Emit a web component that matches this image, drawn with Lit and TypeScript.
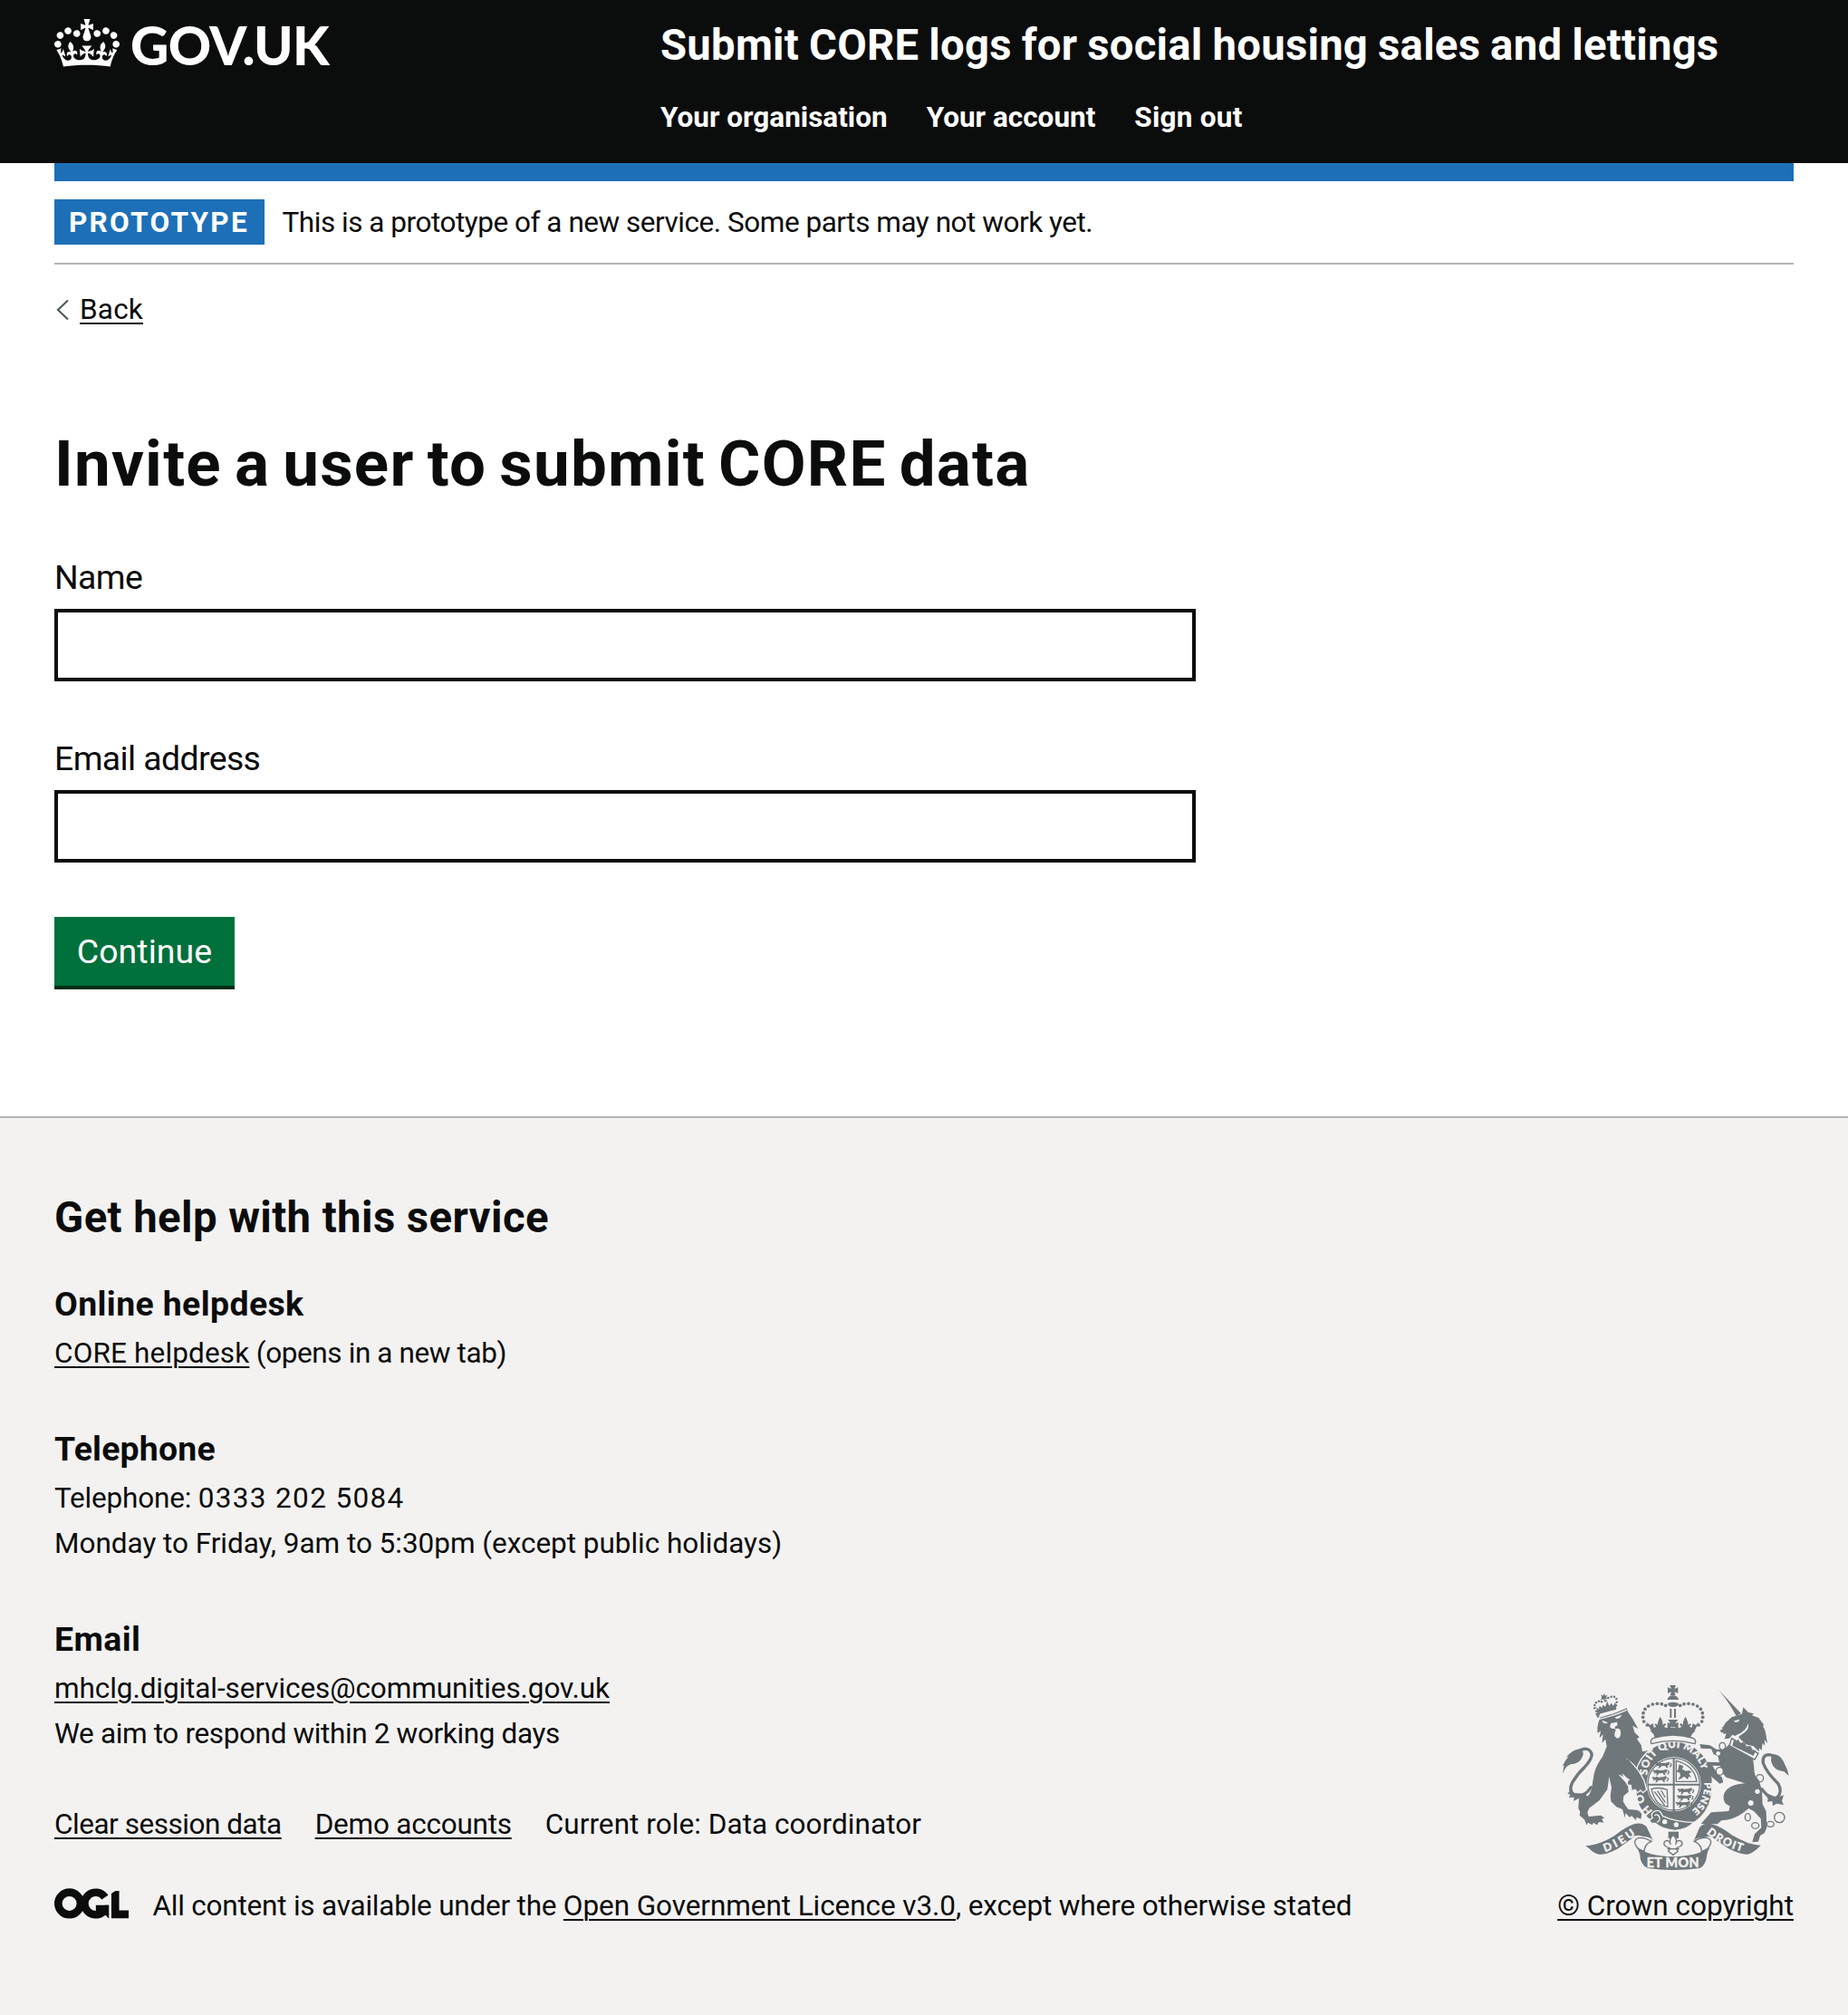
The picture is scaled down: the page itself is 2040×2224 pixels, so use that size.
import { LitElement, html, svg, css } from "lit";
import { customElement } from "lit/decorators.js";

type Dot = [number, number];

const ARCH_DOTS: Dot[] = [
  [352, 192], [341, 180], [338, 166], [339, 152], [345, 139], [356, 129],
  [370, 123], [385, 121], [400, 122], [413, 127],
];

const LION_CROWN_DOTS: Dot[] = [
  [184, 146], [178, 136], [178, 126], [183, 118], [192, 113], [201, 115],
  [214, 112], [223, 102], [233, 98], [243, 98], [250, 105], [251, 116], [249, 127],
];

@customElement("govuk-crown")
class GovukCrown extends LitElement {
  static styles = css`
    :host { display: block; width: 72px; height: 53px; }
    .mark { display: block; width: 100%; height: 100%; fill: currentColor; }
  `;
  render() {
    return html`<svg class="mark" viewBox="0 0 132 97" aria-hidden="true">
      <path fill-rule="evenodd" d="M25 30.2c3.5 1.5 7.7-.2 9.1-3.7 1.5-3.6-.2-7.8-3.9-9.2-3.6-1.4-7.6.3-9.1 3.9-1.4 3.5.3 7.5 3.9 9zM9 39.5c3.6 1.5 7.8-.2 9.2-3.7 1.5-3.6-.2-7.8-3.9-9.1-3.6-1.5-7.6.2-9.1 3.8-1.4 3.5.3 7.5 3.8 9zM4.4 57.2c3.5 1.5 7.7-.2 9.1-3.8 1.5-3.6-.2-7.7-3.9-9.1-3.5-1.5-7.6.3-9.1 3.8-1.4 3.5.3 7.6 3.9 9.1zm38.3-21.4c3.5 1.5 7.7-.2 9.1-3.8 1.5-3.6-.2-7.7-3.9-9.1-3.6-1.5-7.6.3-9.1 3.8-1.3 3.6.4 7.7 3.9 9.1zm64.4-5.6c-3.6 1.5-7.8-.2-9.1-3.7-1.5-3.6.2-7.8 3.8-9.2 3.6-1.4 7.7.3 9.2 3.9 1.3 3.5-.4 7.5-3.9 9zm15.9 9.3c-3.6 1.5-7.7-.2-9.1-3.7-1.5-3.6.2-7.8 3.7-9.1 3.6-1.5 7.7.2 9.2 3.8 1.5 3.5-.3 7.5-3.8 9zm4.7 17.7c-3.6 1.5-7.8-.2-9.2-3.8-1.5-3.6.2-7.7 3.9-9.1 3.6-1.5 7.7.3 9.2 3.8 1.3 3.5-.4 7.6-3.9 9.1zM89.3 35.8c-3.6 1.5-7.8-.2-9.2-3.8-1.4-3.6.2-7.7 3.9-9.1 3.6-1.5 7.7.3 9.2 3.8 1.4 3.6-.3 7.7-3.9 9.1zM69.7 17.7l8.9 4.7V9.3l-8.9 2.8c-.2-.3-.5-.6-.9-.9L72.4 0H59.6l3.5 11.2c-.3.3-.6.5-.9.9l-8.8-2.8v13.1l8.8-4.7c.3.3.6.7.9.9l-5 15.4v.1c-.2.8-.4 1.6-.4 2.4 0 4.1 3.1 7.5 7 8.1h.2c.3 0 .7.1 1 .1.4 0 .7 0 1-.1h.2c4-.6 7.1-4.1 7.1-8.1 0-.8-.1-1.7-.4-2.4V34l-5.1-15.4c.4-.2.7-.6 1-.9zM66 92.8c16.9 0 32.8 1.1 47.1 3.2 4-16.9 8.9-26.7 14-33.5l-9.6-3.4c1 4.9 1.1 7.2 0 10.2-1.5-1.4-3-4.3-4.2-8.7L108.6 76c2.8-2 5-3.2 7.5-3.3-4.4 9.4-10 11.9-13.6 11.2-4.3-.8-6.3-4.6-5.6-7.9 1-4.7 5.7-5.9 8-.5 4.3-8.7-3-11.4-7.6-8.8 7.1-7.2 7.9-13.5 2.1-21.1-8 6.1-8.1 12.3-4.5 20.8-4.7-5.4-12.1-2.5-9.5 6.2 3.4-5.2 7.9-2 7.2 3.1-.6 4.3-6.4 7.8-13.5 7.2-10.3-.9-10.9-8-11.2-13.8 2.5-.5 7.1 1.8 11 7.3L80.2 60c-4.1 4.4-8 5.3-12.3 5.4 1.4-4.4 8-11.6 8-11.6H55.5s6.4 7.2 7.9 11.6c-4.2-.1-8-1-12.3-5.4l1.4 16.4c3.9-5.5 8.5-7.7 10.9-7.3-.3 5.8-.9 12.8-11.1 13.8-7.2.6-12.9-2.9-13.5-7.2-.7-5 3.8-8.3 7.1-3.1 2.7-8.7-4.6-11.6-9.4-6.2 3.7-8.5 3.6-14.7-4.6-20.8-5.8 7.6-5 13.9 2.2 21.1-4.7-2.6-11.9.1-7.7 8.8 2.3-5.5 7.1-4.2 8.1.5.7 3.3-1.3 7.1-5.7 7.9-3.5.7-9-1.8-13.5-11.2 2.5.1 4.7 1.3 7.5 3.3l-4.7-15.4c-1.2 4.4-2.7 7.2-4.3 8.7-1.1-3-.9-5.3 0-10.2l-9.5 3.4c5 6.9 9.9 16.7 14 33.5 14.8-2.1 30.8-3.2 47.7-3.2z"></path>
    </svg>`;
  }
}

@customElement("royal-arms")
class RoyalArms extends LitElement {
  static styles = css`
    :host { display: block; width: 250px; height: 204px; color: #6f777b; }
    .arms { display: block; width: 100%; height: 100%; fill: currentColor; overflow: visible; }
    .paper { fill: #f3f2f1; }
    .line { fill: none; stroke: currentColor; stroke-width: 4; }
    .frame { fill: #f3f2f1; stroke: currentColor; stroke-width: 4; }
    .thick { fill: none; stroke: currentColor; stroke-width: 10; stroke-linecap: round; }
    .cross { fill: none; stroke: currentColor; stroke-width: 6; }
    .cut { fill: none; stroke: #f3f2f1; stroke-width: 4; }
    .edge { stroke: #f3f2f1; stroke-width: 4; }
    .motto { fill: #f3f2f1; stroke: #f3f2f1; stroke-width: 1; font-family: Lato, "Liberation Sans", sans-serif; font-weight: 900; }
  `;

  private passant(x: number, y: number) {
    return svg`<g transform="translate(${x} ${y})">
      <path d="M2 2l8 2 5-3 6 3 16-1 8-3 5 3-4 4 3 5-6-2-2 7 5 3-9-1-3-6-13 1-4 6-8 1 5-5-3-4-8 4 3-6-6-3z"></path>
      <path d="M49 17q8-6 2-12" class="line"></path>
    </g>`;
  }

  private crownHalf() {
    return svg`
      ${ARCH_DOTS.map(([x, y]) => svg`<circle cx=${x} cy=${y} r="5.6"></circle>`)}
      <path d="M368 216l-18-34 12 10 9-6 3 14 8-2-6-8q5-6 10 2 0-10 9-28 11 18 8 28 7-10 12-2l-7 8 10 4 6-12 6 12 11 2v16z"></path>
      <path d="M427 138h6v30h-6z"></path>`;
  }

  render() {
    return html`<svg class="arms" viewBox="72 60 750 612" role="img" aria-label="Royal coat of arms">
      <defs>
        <path id="garterTop" d="M352 358A91 91 0 0 1 534 358"></path>
        <path id="garterRight" d="M541 382A104 104 0 0 1 497 477"></path>
        <path id="garterLeft" d="M370 476A112 112 0 0 1 333 400"></path>
        <path id="scrollLeft" d="M212 612Q262 596 318 552"></path>
        <path id="scrollRight" d="M548 550Q600 594 670 612"></path>
      </defs>

      <!-- lion -->
      ${LION_CROWN_DOTS.map(([x, y]) => svg`<circle cx=${x} cy=${y} r="3.7"></circle>`)}
      <path d="M188 157l62-17-3-24-8 12-6-9-7 10-6-16-7 18-8-6-3 10-8-7-2 12-8-8z"></path>
      <path d="M200 90l6 5 4-8 3 8 8-3-5 8 5 6-9-1-1 8-6-7-8 4 4-8z"></path>
      <path d="M190 168Q236 158 284 136l4 12q8 12 16 24l18 32-18-10 6 22 16 16-8 6 14 20 4 22 20-4-20 26 6 16 22 44 0 32-10 8-10-10-12 7-4-20-10 4-5-12 9-8-24-16-16 4 8 8-22-6 6 10-18-8 16 18 16 18 2 22-16 14-2 18q8 16 18 26l26 2q16 4 18 16l-3 14-14-6-2 10-14-14-8 4-12-14-3 16-8-28-20-8-18-18-2-20 4-26-8-36-6 42-26 36-34 26-6 14 4 14 40-4 12 8-8 4 6 12-16-2-6 10-12-8-4 8-14-8-5 8-7-18-16-14 2-12-6-12 2-30 4-9 26-1q12-14 14-36l6-38q8-30 28-56l14-34-4-24-12 12 4-28-12 12 4-24-10 8q-4-22 8-52l-8 2-8-16 18-4z"></path>
      <path d="M166 398Q142 434 112 424 90 412 104 382 122 352 146 330 172 300 168 286 158 262 128 276" class="thick"></path>
      <path d="M132 272q14 10 4 28-10 22-38 22-20 8-25 32 0-20 5-28l-6 2q8-20 20-30l-8 0q24-28 48-26z"></path>
      <path d="M98 410l-10 8 10 6-6 8 18-1-2 12 18-8 28-4-6-12-36-2z"></path>
      <path class="paper" d="M202 176l20 8q-14 8-20-8zM246 166l21-8q-4 14-19 13zM232 186l20-4 2 10-6 4-4 4 2 4q18-3 18 10 2 18-10 22-12-4-10-16l4-12-4-4-8 0-8-6z"></path>
      <path class="cut" d="M190 173Q240 162 284 142"></path>

      <!-- unicorn -->
      <path d="M589 76l74 78-16 8q-26-48-58-86z"></path>
      <path d="M602 200l10-16 20-18 34-11 4-22 17 17 18 4-6 6 22 8 18 24-4 2q10 16 11 34l4 24-10-12 2 20-8-8-3 24-8-8-1 12-18-18-26-6-24-24-20-8-10 12-16 2 6-18-10 2 2-4-10-2-2-8 8-2-4-8z"></path>
      <path class="paper" d="M640 178l18-5q-4 12-16 9zM686 186q6 20-14 32-16 8-26 24l-12-6q10-12 28-18 20-12 24-32z"></path>
      <path d="M624 256l78 44 4 34q0 30 16 40l10 34 2 46 12 24 2 54-8 18-14 8-6 20-20 2 8-28 22-20-2-30-22-24-18-10-18 14q-28 22-72 26l-14 12-54-1 34-38 58-4 4-16-16-10q-14-24 6-46 20-18 60-20l-62-20q-16-14-18-30l-10-40-14-6-8-18-34-2-4-14 34 4 22 14 26-2z"></path>
      <path class="frame" d="M632 236l88 50-12 20-84-46z"></path>
      <path d="M634 260l6-22 6 10 8-10 6 18 8-8 9 6 2 12 10-6 8 4 2 14 13-4-8 20z"></path>
      <g class="line">
        <circle cx="725" cy="368" r="12"></circle>
        <ellipse cx="685" cy="497" rx="9" ry="12"></ellipse>
        <ellipse cx="710" cy="525" rx="12" ry="10"></ellipse>
        <ellipse cx="760" cy="520" rx="12" ry="9"></ellipse>
        <circle cx="790" cy="498" r="17"></circle>
      </g>
      <circle class="paper" cx="717" cy="412" r="8"></circle>
      <circle class="paper" cx="695" cy="450" r="9"></circle>
      <path class="thick" d="M732 404Q764 446 784 430 800 412 786 386 748 350 736 318 732 290 756 290 772 292 780 306"></path>
      <path d="M766 288q24 0 36 22l14 30 5 20-16-14q-24-2-36-18-12-20-3-40z"></path>
      <path d="M738 414l14 22-2 10 16-2 2 16 12-8 24 4-6-12 6-20-22 8z"></path>

      <!-- garter and quartered shield -->
      <circle class="edge" cx="440" cy="374" r="128"></circle>
      <circle cx="440" cy="408" r="124"></circle>
      <circle class="paper" cx="440" cy="388" r="90"></circle>
      <circle class="line" cx="440" cy="388" r="86"></circle>
      <path d="M440 302v186M354 389h172" class="cross"></path>
      ${this.passant(378, 314)}${this.passant(370, 338)}${this.passant(368, 361)}
      ${this.passant(452, 400)}${this.passant(450, 422)}${this.passant(446, 444)}
      <path class="line" d="M448 310l0 69 68 0q-8-54-68-69z"></path>
      <path d="M458 322l14 6-4 10 12 6 10-2 10 6-10 4 8 14-8-4-4 10-12-10-10 8-10 2 8-12-2-10-12-4 6-6z"></path>
      <path class="line" d="M366 404q26-8 52 2l2 56q-40 0-54-58zM376 412l34 46M386 410l26 38M398 408l14 24"></path>
      <text class="motto" font-size="35"><textPath href="#garterTop" textLength="268">SOIT QUI MALY</textPath></text>
      <text class="motto" font-size="32"><textPath href="#garterRight" textLength="106">PENSE</textPath></text>
      <text class="motto" font-size="36"><textPath href="#garterLeft" textLength="68">HO</textPath></text>
      <path class="edge" d="M372 480q14-10 24 0l8 14q46 20 102 20-20 24-62 27-40-2-66-24-16 2-18-10l10-8q-8-10 2-19z"></path>
      <circle class="paper" cx="410" cy="512" r="8"></circle>
      <circle class="paper" cx="448" cy="522" r="8"></circle>
      <path class="cut" d="M376 492q10-8 16 4t-8 18"></path>

      <!-- limbs that reach over the garter -->
      <path class="edge" d="M286 306q26 18 44 48l12 22 8 30-12 10-8-8-10 8-8-10-12 4-2-18-12-2 0-12 8-8-8-14z"></path>
      <path d="M262 300l28 6 20 26-6 46-20-12-30-30z"></path>
      <path d="M604 316l-56-2 6 26 12 24 26 22 12-4-4-16-20-20-12-20 40 2z"></path>
      <ellipse class="frame" cx="601" cy="262" rx="10" ry="12"></ellipse>
      <ellipse class="frame" cx="592" cy="345" rx="12" ry="13"></ellipse>
      <circle class="paper" cx="587" cy="286" r="7"></circle>

      <!-- royal crown -->
      ${this.crownHalf()}
      <g transform="translate(874 0) scale(-1 1)">${this.crownHalf()}</g>
      <path d="M420 120q17-8 36 0 0 12-18 12t-18-12z"></path>
      <path d="M418 108q4-14 19-14t20 14zM434 92h5v16h-5zM427 60h20l-5 12 12-5v20l-12-5 4 11h-18l4-11-12 5V67l12 5z"></path>
      <path d="M421 174h33l-9 12 10-3v16l-36 0v-15l10 2z"></path>
      <path d="M362 210Q437 190 512 210q-12 10-18 25-58-14-116 0-4-15-16-25z"></path>
      <path class="frame" d="M370 236q67-22 136 0 10 8 4 18-72-20-144 0-6-10 4-18z"></path>

      <!-- fleur-de-lis -->
      <path d="M422 545h34v22h-34z"></path>
      <path class="frame" d="M438 556q16 14 8 32 4-18 18-12 10 12-4 18l-12 6 6 10-16 12-16-12 6-10-14-6q-12-8-2-18 12-6 18 12-8-18 8-32z"></path>
      <path class="line" d="M418 602h40"></path>

      <!-- scroll -->
      <path d="M148 592q44-2 96-34 38-30 66-39 26-6 40 10l22 46q-10-14-34-14-26-10-36 6l-44 32q-42 24-66 21-20-6-30-18z"></path>
      <path class="frame" d="M366 577q-20-12-40-12-18 4-14 20 6 16 18 20l12 6q0-24 24-34z"></path>
      <path d="M728 590q-44-2-96-34-36-28-66-36-26-6-40 10l-20 46q10-14 34-12 26-8 36 6l44 30q42 22 66 20 20-6 42-30z"></path>
      <path class="frame" d="M508 577q20-14 40-12 18 4 14 20-6 16-18 20l-12 6q0-24-24-34z"></path>
      <path d="M314 594q40 32 124 34 80-2 122-30-8 10-10 24-4 36-24 44-88 12-172 0-26-12-26-44-4-18-14-28z"></path>
      <text class="motto" font-size="37"><textPath href="#scrollLeft" textLength="118">DIEU</textPath></text>
      <text class="motto" font-size="37"><textPath href="#scrollRight" textLength="134">DROIT</textPath></text>
      <text class="motto" font-size="43" x="350" y="663" textLength="174">ET MON</text>
    </svg>`;
  }
}

@customElement("service-header")
class ServiceHeader extends LitElement {
  static styles = css`
    :host { display: block; background: #0b0c0c; color: #fff; height: 180px; }
    .bar { display: grid; grid-template-columns: 669px 1fr; padding: 0 60px; }
    .brand { display: flex; gap: 12px; padding-top: 21px; }
    .word { font: 900 58.5px/60px Lato, "Liberation Sans", sans-serif; letter-spacing: -0.6px; margin-top: -2px; }
    .service { padding-top: 25px; }
    .title { font-size: 47.3px; line-height: 50px; font-weight: 700; letter-spacing: 0.22px; word-spacing: -1px; white-space: nowrap; }
    .nav { display: flex; gap: 43px; margin-top: 35px; font-size: 31.5px; line-height: 40px; font-weight: 700; }
    .out { letter-spacing: 0.24px; }
  `;
  render() {
    return html`<div class="bar">
      <div class="brand"><govuk-crown></govuk-crown><span class="word">GOV.UK</span></div>
      <div class="service">
        <div class="title">Submit CORE logs for social housing sales and lettings</div>
        <nav class="nav"><span>Your organisation</span><span>Your account</span><span class="out">Sign out</span></nav>
      </div>
    </div>`;
  }
}

@customElement("service-footer")
class ServiceFooter extends LitElement {
  static styles = css`
    :host { display: block; background: #f3f2f1; border-top: 2px solid #b1b4b6; padding: 85px 60px 100px; font-size: 31.5px; line-height: 50px; }
    h2, h3, p { margin: 0; font-weight: 700; }
    h2 { font-size: 47.3px; letter-spacing: 0.41px; margin-bottom: 45px; }
    h3 { font-size: 37.4px; letter-spacing: 0.4px; margin-bottom: 5px; }
    p { font-weight: 400; white-space: nowrap; }
    a { color: inherit; text-decoration: underline; text-decoration-thickness: 2px; text-underline-offset: 4px; }
    .block { margin-bottom: 55px; }
    .desk { letter-spacing: -0.39px; }
    .desk-link { letter-spacing: 0.15px; }
    .phone-head { letter-spacing: 0.2px; }
    .phone { letter-spacing: -0.2px; }
    .number { letter-spacing: 1.35px; }
    .hours { letter-spacing: -0.03px; }
    .mail { letter-spacing: -0.08px; }
    .aim { letter-spacing: -0.36px; }
    .meta { display: flex; justify-content: space-between; align-items: flex-end; margin-top: -134px; }
    .links { display: flex; gap: 37px; line-height: 40px; margin-bottom: 50px; }
    .clear { letter-spacing: -0.47px; }
    .demo { letter-spacing: -0.24px; }
    .role { letter-spacing: 0.05px; }
    .licence { display: flex; gap: 26.5px; line-height: 40px; letter-spacing: -0.13px; white-space: nowrap; }
    .lead { letter-spacing: -0.22px; }
    .ogl-link { letter-spacing: -0.08px; }
    .ogl { display: block; width: 82px; height: 34px; }
    .copyright { display: flex; flex-direction: column; align-items: center; gap: 20px; line-height: 40px; }
  `;
  render() {
    return html`
      <h2>Get help with this service</h2>
      <div class="block">
        <h3>Online helpdesk</h3>
        <p class="desk"><a class="desk-link">CORE helpdesk</a> (opens in a new tab)</p>
      </div>
      <div class="block">
        <h3 class="phone-head">Telephone</h3>
        <p class="phone">Telephone: <span class="number">0333 202 5084</span></p>
        <p class="hours">Monday to Friday, 9am to 5:30pm (except public holidays)</p>
      </div>
      <div class="block">
        <h3>Email</h3>
        <p class="mail"><a>mhclg.digital-services@communities.gov.uk</a></p>
        <p class="aim">We aim to respond within 2 working days</p>
      </div>
      <div class="meta">
        <div>
          <div class="links"><a class="clear">Clear session data</a><a class="demo">Demo accounts</a><span class="role">Current role: Data coordinator</span></div>
          <div class="licence">
            <svg class="ogl" viewBox="0 0 483 196" role="img" aria-label="OGL" fill="none" stroke="#0b0c0c" stroke-width="50.7">
              <circle cx="97.8" cy="97.8" r="72.4"></circle>
              <path d="M329 58A72.4 72.4 0 1 0 329 138M353 133H270"></path>
              <path d="M329 108h26v86h-3l-30-34z" fill="#0b0c0c" stroke="none"></path>
              <path d="M396 16V168H483"></path>
              <path d="M368 0h54L368 34z" fill="#f3f2f1" stroke="none"></path>
            </svg>
            <span><span class="lead">All content is available under the </span><a class="ogl-link">Open Government Licence v3.0</a>, except where otherwise stated</span>
          </div>
        </div>
        <div class="copyright"><royal-arms></royal-arms><a>© Crown copyright</a></div>
      </div>`;
  }
}

@customElement("app-root")
class AppRoot extends LitElement {
  static styles = css`
    :host { display: block; min-height: 2224px; background: #fff; color: #0b0c0c; font-family: Roboto, "Liberation Sans", sans-serif; }
    .page { padding: 0 60px; }
    .stripe { height: 20px; background: #1d70b8; }
    .phase { display: flex; gap: 19.5px; height: 50px; padding: 20px 0; border-bottom: 2px solid #b1b4b6; font-size: 31.5px; line-height: 52px; }
    .tag { box-sizing: border-box; width: 232px; padding-left: 16px; background: #1d70b8; color: #fff; font-weight: 700; letter-spacing: 2.3px; }
    .phase-text { letter-spacing: -0.47px; }
    .back { display: flex; gap: 12px; height: 40px; margin-top: 29px; font-size: 31.5px; line-height: 42px; }
    .chevron { display: block; width: 14px; height: 24px; margin: 9px 0 0 2px; fill: none; stroke: #505a5f; stroke-width: 2.2; }
    .back-link { text-decoration: underline; text-decoration-thickness: 2px; text-underline-offset: 4px; letter-spacing: 0.2px; }
    h1 { margin: 111px 0 60px; font-size: 70.9px; line-height: 80px; font-weight: 700; letter-spacing: 1.25px; word-spacing: -4.8px; white-space: nowrap; }
    .field { margin-bottom: 60px; }
    label { display: block; font-size: 37.4px; line-height: 50px; margin-bottom: 10px; letter-spacing: -0.6px; }
    input { display: block; box-sizing: border-box; width: 1260px; height: 80px; margin: 0; padding: 10px; border: 4px solid #0b0c0c; border-radius: 0; background: #fff; }
    .submit { display: block; box-sizing: border-box; width: 199px; height: 76px; margin: 0 0 144px; padding: 1px 0 0; border: 0; border-radius: 0; background: #00703c; color: #fff; box-shadow: 0 4px 0 #002d18; font: 400 37.4px/75px Roboto, "Liberation Sans", sans-serif; letter-spacing: 0.1px; }
  `;
  render() {
    return html`
      <service-header></service-header>
      <div class="page">
        <div class="stripe"></div>
        <div class="phase"><span class="tag">PROTOTYPE</span><span class="phase-text">This is a prototype of a new service. Some parts may not work yet.</span></div>
        <div class="back">
          <svg class="chevron" viewBox="0 0 14 24" aria-hidden="true"><path d="M13 1.5 2 12 13 22.5"></path></svg>
          <a class="back-link">Back</a>
        </div>
        <h1>Invite a user to submit CORE data</h1>
        <div class="field"><label for="name">Name</label><input id="name" type="text" /></div>
        <div class="field"><label for="email">Email address</label><input id="email" type="email" /></div>
        <button class="submit" type="button">Continue</button>
      </div>
      <service-footer></service-footer>`;
  }
}
